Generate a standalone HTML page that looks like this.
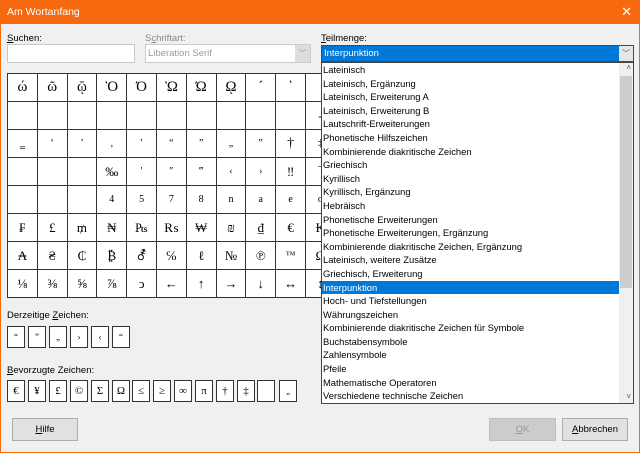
<!DOCTYPE html>
<html><head><meta charset="utf-8"><style>
*{box-sizing:border-box;margin:0;padding:0}
body{width:640px;height:453px;overflow:hidden;background:#f7690f;font-family:"Liberation Sans",sans-serif;font-size:9.5px;color:#000;position:relative}
.win{position:absolute;left:1px;top:24px;width:638px;height:428px;background:#f0f0f0}
.t{position:absolute;left:7px;top:6px;color:#fff;font-size:10.5px}
.x{position:absolute;right:8px;top:4px;color:#fff;font-size:13px}
.a{position:absolute}
.inp{position:absolute;background:#fff;border:1px solid #c8c8c8}
.grid{position:absolute;left:7px;top:73px;border-collapse:collapse;font-family:"Liberation Serif","DejaVu Serif",serif}
.grid td{border:1px solid #333;width:29.8px;height:28px;text-align:center;font-size:13px;background:#fff;padding:0;overflow:hidden}
.grid tr.big td{font-size:15px}
.sm td{font-size:10px}
.box{position:absolute;width:18px;height:22px;background:#fff;border:1px solid #333;font-size:9px;text-align:center;line-height:20px;font-family:"Liberation Serif",serif}
.list{position:absolute;left:321px;top:62px;width:313px;height:342px;background:#fff;border:1px solid #444;overflow:hidden}
.list div{height:13.6px;line-height:13.6px;padding-left:1px;font-size:9.4px;white-space:nowrap}
.sel{background:#0078d7;color:#fff}
.btn{position:absolute;height:23px;border:1px solid #adadad;background:#e1e1e1;text-align:center;line-height:21px;font-size:9.5px}
u{text-decoration:underline}
</style></head><body>
<div class="t">Am Wortanfang</div><div class="x">✕</div>
<div class="win"></div>
<div class="a" style="left:7px;top:33px"><u>S</u>uchen:</div>
<div class="inp" style="left:7px;top:44px;width:128px;height:19px"></div>
<div class="a" style="left:145px;top:33px;color:#888">S<u>c</u>hriftart:</div>
<div class="inp" style="left:145px;top:44px;width:166px;height:19px;color:#999;padding:3px 2px;border-color:#ccc">Liberation Serif<span style="position:absolute;right:0;top:0;width:15px;height:17px;background:#ddd;color:#999;text-align:center;font-size:8px;line-height:17px">﹀</span></div>
<div class="a" style="left:321px;top:33px"><u>T</u>eilmenge:</div>
<div class="a" style="left:321px;top:45px;width:313px;height:17px;background:#0078d7;color:#fff;padding:2px 2px;border:1px dotted #333">Interpunktion<span style="position:absolute;right:0;top:0;width:14px;height:15px;background:#e6e6e6;color:#555;text-align:center;font-size:8px;line-height:15px">﹀</span></div>
<table class="grid">
<tr class="big"><td>ώ</td><td>ῶ</td><td>ῷ</td><td>Ὸ</td><td>Ό</td><td>Ὼ</td><td>Ώ</td><td>ῼ</td><td>´</td><td>῾</td><td></td></tr>
<tr><td></td><td></td><td></td><td></td><td></td><td></td><td></td><td></td><td></td><td></td><td>‐</td></tr>
<tr class="sm"><td>‗</td><td>‘</td><td>’</td><td>‚</td><td>‛</td><td>“</td><td>”</td><td>„</td><td>‟</td><td style="font-size:14px">†</td><td>‡</td></tr>
<tr><td></td><td></td><td></td><td>‰</td><td style="font-size:10px">′</td><td style="font-size:10px">″</td><td style="font-size:10px">‴</td><td style="font-size:10px">‹</td><td style="font-size:10px">›</td><td>‼</td><td>‾</td></tr>
<tr class="sm"><td></td><td></td><td></td><td>4</td><td>5</td><td>7</td><td>8</td><td>n</td><td>a</td><td>e</td><td>o</td></tr>
<tr><td>₣</td><td>£</td><td>₥</td><td>₦</td><td>₧</td><td>₨</td><td>₩</td><td>₪</td><td>₫</td><td>€</td><td>₭</td></tr>
<tr><td>₳</td><td>₴</td><td>₵</td><td>₿</td><td>⚦</td><td>℅</td><td>ℓ</td><td>№</td><td>℗</td><td style="font-size:10px">™</td><td>Ω</td></tr>
<tr><td>⅛</td><td>⅜</td><td>⅝</td><td>⅞</td><td>ↄ</td><td>←</td><td>↑</td><td>→</td><td>↓</td><td>↔</td><td>↕</td></tr>
</table>
<div class="a" style="left:7px;top:310px">Derzeitige <u>Z</u>eichen:</div>
<div class="box" style="left:7px;top:326px">“</div><div class="box" style="left:28px;top:326px">”</div><div class="box" style="left:49px;top:326px">„</div><div class="box" style="left:70px;top:326px">›</div><div class="box" style="left:91px;top:326px">‹</div><div class="box" style="left:112px;top:326px">“</div>
<div class="a" style="left:7px;top:365px"><u>B</u>evorzugte Zeichen:</div>
<div class="box" style="left:7px;top:380px;font-size:11px">€</div><div class="box" style="left:28px;top:380px;font-size:11px">¥</div><div class="box" style="left:49px;top:380px;font-size:11px">£</div><div class="box" style="left:70px;top:380px;font-size:11px">©</div><div class="box" style="left:91px;top:380px;font-size:11px">Σ</div><div class="box" style="left:112px;top:380px;font-size:11px">Ω</div><div class="box" style="left:132px;top:380px;font-size:11px">≤</div><div class="box" style="left:153px;top:380px;font-size:11px">≥</div><div class="box" style="left:174px;top:380px;font-size:11px">∞</div><div class="box" style="left:195px;top:380px;font-size:11px">π</div><div class="box" style="left:216px;top:380px;font-size:11px">†</div><div class="box" style="left:237px;top:380px;font-size:11px">‡</div><div class="box" style="left:257px;top:380px"></div><div class="box" style="left:279px;top:380px">„</div>
<div class="list">
<div>Lateinisch</div><div>Lateinisch, Ergänzung</div><div>Lateinisch, Erweiterung A</div><div>Lateinisch, Erweiterung B</div><div>Lautschrift-Erweiterungen</div><div>Phonetische Hilfszeichen</div><div>Kombinierende diakritische Zeichen</div><div>Griechisch</div><div>Kyrillisch</div><div>Kyrillisch, Ergänzung</div><div>Hebräisch</div><div>Phonetische Erweiterungen</div><div>Phonetische Erweiterungen, Ergänzung</div><div>Kombinierende diakritische Zeichen, Ergänzung</div><div>Lateinisch, weitere Zusätze</div><div>Griechisch, Erweiterung</div><div class="sel" style="margin-right:14px">Interpunktion</div><div>Hoch- und Tiefstellungen</div><div>Währungszeichen</div><div>Kombinierende diakritische Zeichen für Symbole</div><div>Buchstabensymbole</div><div>Zahlensymbole</div><div>Pfeile</div><div>Mathematische Operatoren</div><div>Verschiedene technische Zeichen</div>
<span style="position:absolute;right:0;top:0;width:14px;height:340px;background:#f0f0f0"></span>
<span style="position:absolute;right:1px;top:13px;width:12px;height:212px;background:#cdcdcd"></span>
<span style="position:absolute;right:2px;top:0;font-size:8px;color:#555">˄</span>
<span style="position:absolute;right:2px;bottom:2px;font-size:8px;color:#555">˅</span>
</div>
<div class="btn" style="left:12px;top:418px;width:66px"><u>H</u>ilfe</div>
<div class="btn" style="left:489px;top:418px;width:67px;background:#ccc;border-color:#bfbfbf;color:#999"><u>O</u>K</div>
<div class="btn" style="left:562px;top:418px;width:66px"><u>A</u>bbrechen</div>
</body></html>
